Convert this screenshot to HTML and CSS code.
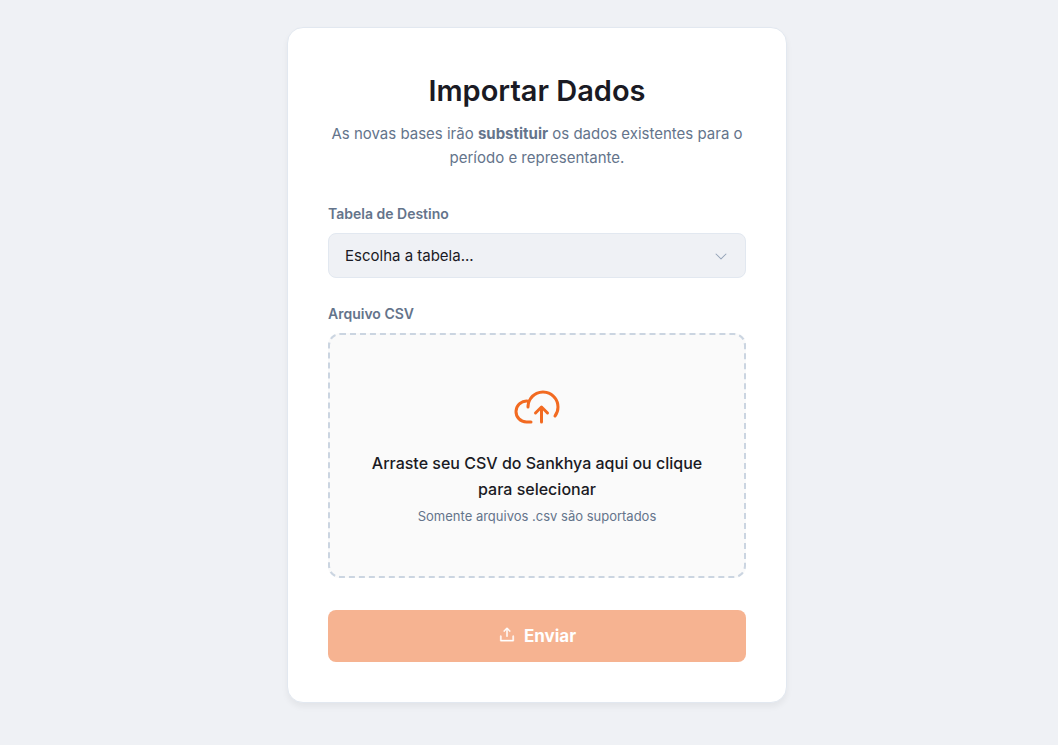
FILE: index.html
```html
<!DOCTYPE html>
<html lang="pt-BR">
<head>
    <meta charset="UTF-8">
    <meta name="viewport" content="width=device-width, initial-scale=1.0">
    <title>Importar Dados</title>
    <link rel="stylesheet" href="styles.css">
</head>
<body>
    <main class="card">
        <h1>Importar Dados</h1>
        <p class="subtitle">As novas bases irão <strong>substituir</strong> os dados existentes para o período e representante.</p>

        <form id="uploadForm">
            <label class="field-label" for="tabela">Tabela de Destino</label>
            <div class="select-wrap">
                <select id="tabela" name="tabela">
                    <option value="">Escolha a tabela...</option>
                </select>
                <svg class="caret" viewBox="0 0 256 256" aria-hidden="true">
                    <path d="M213.66 101.66l-80 80a8 8 0 0 1-11.32 0l-80-80a8 8 0 0 1 11.32-11.32L128 164.69l74.34-74.35a8 8 0 0 1 11.32 11.32Z"/>
                </svg>
            </div>

            <label class="field-label" for="arquivo">Arquivo CSV</label>
            <label class="drop-zone" for="arquivo">
                <svg class="drop-icon" viewBox="0 0 256 256" aria-hidden="true">
                    <path d="M248,128a87.34,87.34,0,0,1-17.6,52.81,8,8,0,1,1-12.8-9.62A71.34,71.34,0,0,0,232,128a72,72,0,0,0-144,0,8,8,0,0,1-16,0,88,88,0,0,1,3.29-23.88C74.2,104,73.1,104,72,104a48,48,0,0,0,0,96H96a8,8,0,0,1,0,16H72A64,64,0,1,1,81.29,88.68,88,88,0,0,1,248,128Zm-90.34-5.66a8,8,0,0,0-11.32,0l-32,32a8,8,0,0,0,11.32,11.32L144,147.31V208a8,8,0,0,0,16,0V147.31l18.34,18.35a8,8,0,0,0,11.32-11.32Z"/>
                </svg>
                <span class="drop-text">Arraste seu CSV do Sankhya aqui ou clique para selecionar</span>
                <span class="drop-hint">Somente arquivos .csv são suportados</span>
            </label>
            <input class="file-input" type="file" id="arquivo" name="arquivo" accept=".csv">

            <button class="submit" type="submit" disabled>
                <svg class="submit-icon" viewBox="0 0 256 256" aria-hidden="true">
                    <path d="M224,144v64a8,8,0,0,1-8,8H40a8,8,0,0,1-8-8V144a8,8,0,0,1,16,0v56H208V144a8,8,0,0,1,16,0ZM93.66,77.66,120,51.31V144a8,8,0,0,0,16,0V51.31l26.34,26.35a8,8,0,0,0,11.32-11.32l-40-40a8,8,0,0,0-11.32,0l-40,40A8,8,0,0,0,93.66,77.66Z"/>
                </svg>
                <span>Enviar</span>
            </button>
        </form>
    </main>
</body>
</html>
```
FILE: styles.css
```css
* {
    box-sizing: border-box;
}
body {
    margin: 0;
    padding: 27px 0 27px 16px;
    background: #eff1f5;
    color: #1a1a24;
    font-family: Inter, sans-serif;
    font-size: 16px;
    line-height: 26px;
}
.card {
    max-width: 500px;
    margin: 0 auto;
    padding: 40px;
    background: #fff;
    border: 1px solid #e2e8f0;
    border-radius: 16px;
    box-shadow: 0 4px 6px rgba(0, 0, 0, 0.05);
}
h1 {
    margin: 0 0 8px;
    font-size: 29px;
    font-weight: 600;
    line-height: 46px;
    text-align: center;
}
.subtitle {
    margin: 0 0 32px;
    color: #64748b;
    font-size: 15px;
    line-height: 24px;
    text-align: center;
}
.field-label {
    display: block;
    margin-bottom: 8px;
    color: #64748b;
    font-size: 14px;
    font-weight: 600;
    line-height: 23px;
}
.select-wrap {
    position: relative;
    margin-bottom: 24px;
}
select {
    display: block;
    width: 100%;
    height: 45px;
    padding: 0 40px 0 16px;
    appearance: none;
    background: #eff1f5;
    border: 1px solid #e2e8f0;
    border-radius: 8px;
    color: inherit;
    font-family: inherit;
    font-size: 15px;
}
.caret {
    position: absolute;
    top: 15px;
    right: 17px;
    width: 16px;
    height: 16px;
    fill: #94a3b8;
    pointer-events: none;
}
.drop-zone {
    display: flex;
    flex-direction: column;
    align-items: center;
    margin-bottom: 32px;
    padding: 48px 32px 49px;
    background: #fafafa;
    border: 2px dashed #cbd5e1;
    border-radius: 12px;
    text-align: center;
    cursor: pointer;
}
.drop-icon {
    width: 48px;
    height: 48px;
    margin-bottom: 19px;
    fill: #f26a21;
}
.drop-text {
    font-weight: 500;
}
.drop-hint {
    color: #64748b;
    font-size: 13px;
    line-height: 21px;
    margin-top: 4px;
}
.file-input {
    display: none;
}
.submit {
    display: flex;
    align-items: center;
    justify-content: center;
    gap: 8px;
    width: 100%;
    height: 52px;
    background: #f6b391;
    border: 0;
    border-radius: 8px;
    color: #fff;
    font-family: inherit;
    font-size: 17px;
    font-weight: 700;
}
.submit-icon {
    width: 18px;
    height: 18px;
    margin-bottom: 2px;
    fill: currentColor;
    stroke: currentColor;
    stroke-width: 6;
}
```
